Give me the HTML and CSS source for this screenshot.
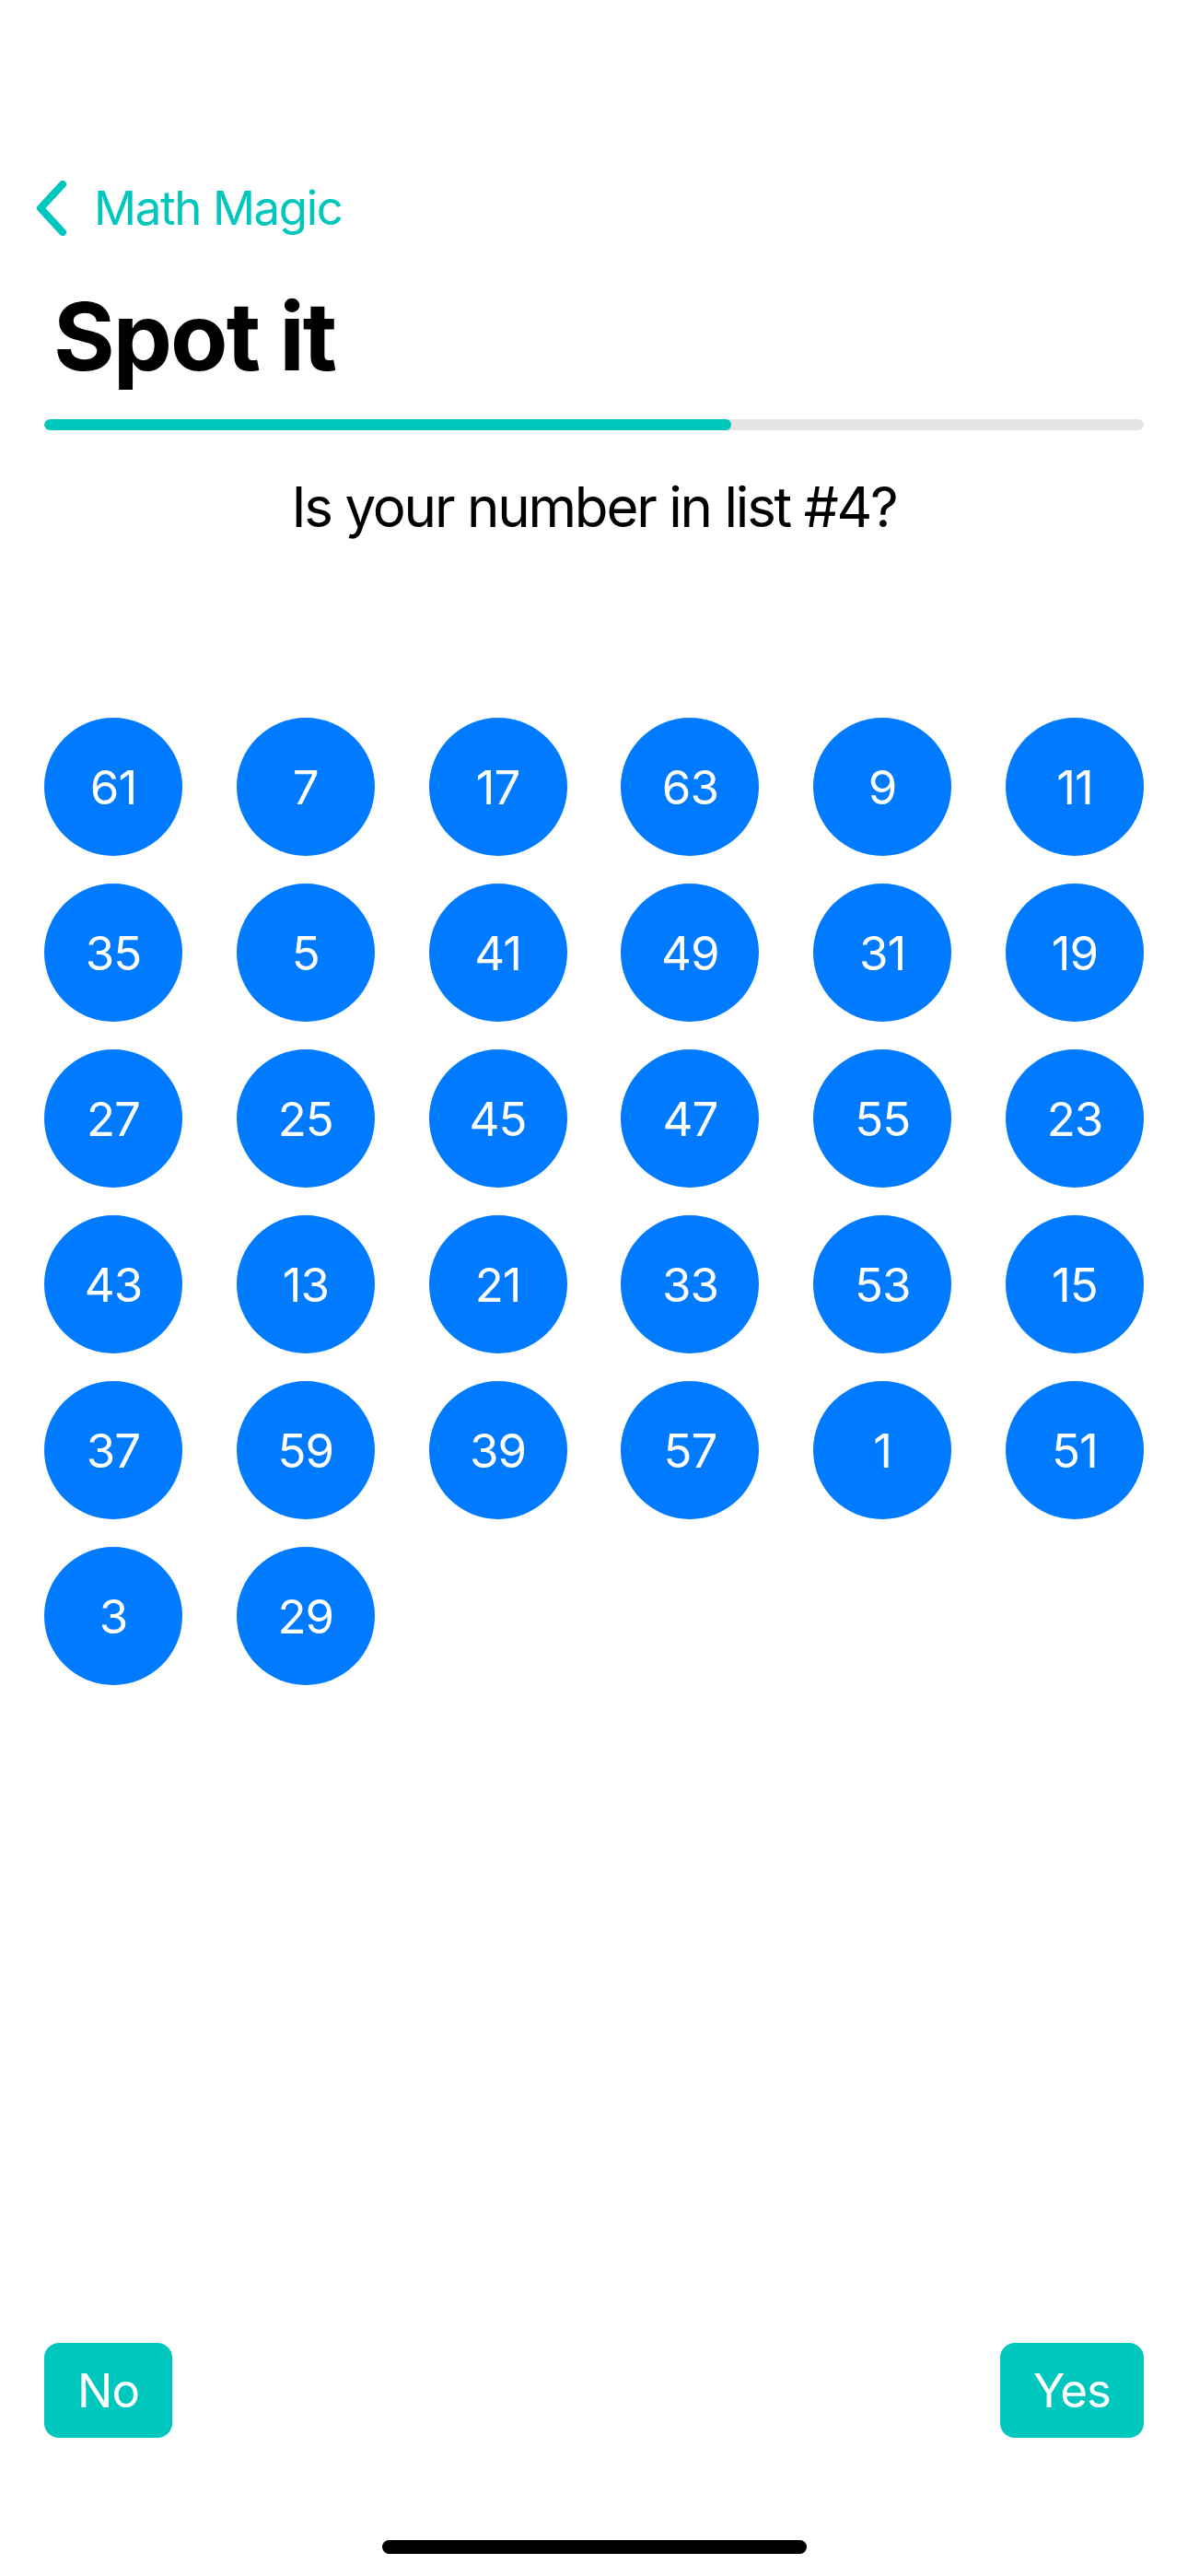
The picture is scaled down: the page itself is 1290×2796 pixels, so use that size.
FILE: index.html
```html
<!DOCTYPE html>
<html lang="en">
<head>
  <meta charset="UTF-8">
  <title>Spot it</title>
  <meta name="viewport" content="width=device-width, initial-scale=1.0">
  <link rel="stylesheet" href="styles.css">
</head>
<body>
  <div id="screen">

    <!--nav bar-->
    <div class="nav">
      <svg class="chevron" width="36" height="60" viewBox="0 0 36 60">
        <path d="M30 4 L6 30 L30 56" fill="none" stroke="#00c7be" stroke-width="8" stroke-linecap="round" stroke-linejoin="round"/>
      </svg>
      <span class="nav-title">Math Magic</span>
    </div>

    <h1 class="title">Spot it</h1>

    <div class="progress">
      <div class="progress-fill"></div>
    </div>

    <p class="question">Is your number in list #4?</p>

    <div class="numbers">
      <div class="num">61</div><div class="num">7</div><div class="num">17</div><div class="num">63</div><div class="num">9</div><div class="num">11</div>
      <div class="num">35</div><div class="num">5</div><div class="num">41</div><div class="num">49</div><div class="num">31</div><div class="num">19</div>
      <div class="num">27</div><div class="num">25</div><div class="num">45</div><div class="num">47</div><div class="num">55</div><div class="num">23</div>
      <div class="num">43</div><div class="num">13</div><div class="num">21</div><div class="num">33</div><div class="num">53</div><div class="num">15</div>
      <div class="num">37</div><div class="num">59</div><div class="num">39</div><div class="num">57</div><div class="num">1</div><div class="num">51</div>
      <div class="num">3</div><div class="num">29</div>
    </div>

    <div class="answers">
      <button class="answer-btn">No</button>
      <button class="answer-btn">Yes</button>
    </div>

    <div class="home-bar"></div>
  </div>
</body>
</html>
```

FILE: styles.css
```css
html, body{
  margin: 0;
  padding: 0;
  background: #fff;
}
body{
  font-family: Inter, "Noto Sans", "Liberation Sans", sans-serif;
  color: #000;
}

#screen{
  box-sizing: border-box;
  display: flex;
  flex-direction: column;
  height: 2796px;
  width: 1290px;
  padding: 0 48px;
}

/*nav bar*/
.nav{
  align-items: center;
  display: flex;
  gap: 28px;
  height: 72px;
  margin: 190px 0 0 -10px;
}
.chevron{
  display: block;
}
.nav-title{
  color: #00c7be;
  font-size: 51px;
  letter-spacing: -1.4px;
  line-height: 72px;
}

.title{
  font-size: 102px;
  font-weight: 700;
  letter-spacing: -2px;
  line-height: 122px;
  margin: 42px 0 0 10px;
}

/*progress bar*/
.progress{
  background: #e5e5e5;
  border-radius: 6px;
  height: 12px;
  margin-top: 29px;
  overflow: hidden;
}
.progress-fill{
  background: #00c7be;
  border-radius: 6px;
  height: 100%;
  width: 62.5%;
}

.question{
  font-size: 60px;
  letter-spacing: -2.2px;
  line-height: 72px;
  margin: 47px 0 0;
  text-align: center;
}

/*number grid*/
.numbers{
  display: grid;
  grid-template-columns: repeat(6, 150px);
  justify-content: space-between;
  row-gap: 30px;
  margin-top: 193px;
}
.num{
  align-items: center;
  background: #007aff;
  border-radius: 50%;
  color: #fff;
  display: flex;
  font-size: 51px;
  height: 150px;
  justify-content: center;
  letter-spacing: -1px;
  width: 150px;
}

/*answer buttons*/
.answers{
  display: flex;
  justify-content: space-between;
  margin-top: auto;
}
.answer-btn{
  background: #00c7be;
  border: none;
  border-radius: 16px;
  color: #fff;
  font-family: inherit;
  font-size: 51px;
  height: 103px;
  letter-spacing: -1px;
  padding: 0 36px;
}

.home-bar{
  align-self: center;
  background: #000;
  border-radius: 8px;
  height: 15px;
  margin: 111px 0 24px;
  width: 461px;
}
```
